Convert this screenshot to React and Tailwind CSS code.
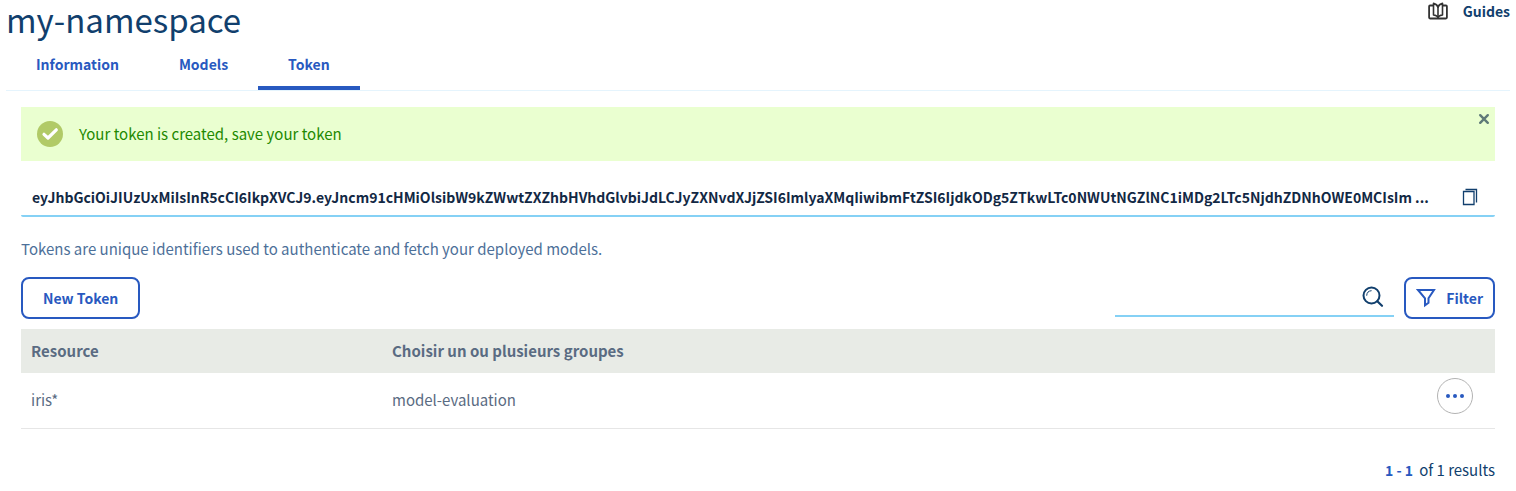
import { useState } from "react";

const TOKEN =
  "eyJhbGciOiJIUzUxMiIsInR5cCI6IkpXVCJ9.eyJncm91cHMiOlsibW9kZWwtZXZhbHVhdGlvbiJdLCJyZXNvdXJjZSI6ImlyaXMqIiwibmFtZSI6IjdkODg5ZTkwLTc0NWUtNGZlNC1iMDg2LTc5NjdhZDNhOWE0MCIsIm ...";

const TABS = ["Information", "Models", "Token"];
const ROWS = [{ resource: "iris*", groups: "model-evaluation" }];

function BookIcon() {
  return (
    <svg width="20" height="18" viewBox="0 0 20 18" fill="none" stroke="#333333" strokeWidth="1.8" strokeLinejoin="round" strokeLinecap="round" aria-hidden="true">
      <path d="M5.300 3.500H2a.9.9 0 0 0-.9.9v11.200a.9.9 0 0 0 .9.900h16a.9.9 0 0 0 .9-.9V4.400a.9.9 0 0 0-.9-.9h-3.300" />
      <path d="M5.500 1.400v11.600c2.500.3 3.900 1 4.500 2.500.6-1.500 2-2.200 4.500-2.500V1.400C12 2 10.600 3.300 10 5.200 9.400 3.300 8 2 5.500 1.400z" strokeWidth="1.600" />
      <path d="M10 5.200v10.300" strokeWidth="1.600" />
    </svg>
  );
}

function CheckIcon() {
  return (
    <svg width="26" height="26" viewBox="0 0 26 26" aria-hidden="true">
      <circle cx="13" cy="13" r="13" fill="#b1ca67" />
      <path d="m7 13.300 4 3.700 8.300-8.200" fill="none" stroke="#fff" strokeWidth="3.200" strokeLinecap="round" strokeLinejoin="round" />
    </svg>
  );
}

function CloseIcon() {
  return (
    <svg width="12" height="12" viewBox="0 0 12 12" fill="none" stroke="#5f7a78" strokeWidth="2.400" strokeLinecap="round" aria-hidden="true">
      <path d="m2.200 2.200 7.600 7.600M9.800 2.200 2.200 9.800" />
    </svg>
  );
}

function CopyIcon() {
  return (
    <svg width="16" height="18" viewBox="0 0 16 18" fill="none" stroke="#113f6d" aria-hidden="true">
      <path d="M1.500 3.500h10.500v13H1.500z" strokeWidth="1.300" />
      <path d="M3.500 1.500h11v13" strokeWidth="1.300" />
    </svg>
  );
}

function SearchIcon() {
  return (
    <svg width="22" height="22" viewBox="0 0 22 22" fill="none" stroke="#113f6d" strokeLinecap="round" aria-hidden="true">
      <circle cx="9.500" cy="9.500" r="8" strokeWidth="2" />
      <path d="m15.300 15.300 4.700 4.500" strokeWidth="2.200" />
      <path d="M4.700 9.300A4.800 4.800 0 0 1 9.200 4.700" strokeWidth="1" />
    </svg>
  );
}

function FilterIcon() {
  return (
    <svg width="20" height="20" viewBox="0 0 20 20" fill="none" stroke="#2859c0" strokeWidth="2" strokeLinejoin="miter" aria-hidden="true">
      <path d="M2 2h16l-5.500 8.300v4.500L9 17.300v-7z" />
    </svg>
  );
}

export default function App() {
  const [open, setOpen] = useState(true);
  return (
    <div className="px-[6px] text-[15px] leading-5 text-[#113f6d] [font-family:'Noto_Sans_CJK_SC','Noto_Sans',sans-serif]">
      <header className="flex items-start justify-between">
        <h1 className="mb-[6px] text-[33px] leading-[38px] font-normal">my-namespace</h1>
        <a href="#guides" className="flex items-center gap-[15px] pt-px text-sm leading-5 font-bold">
          <BookIcon />
          Guides
        </a>
      </header>

      <nav className="flex border-b border-[#e5f4fd] text-sm leading-5 text-[#2859c0]">
        {TABS.map((tab) => (
          <a
            key={tab}
            href={"#" + tab.toLowerCase()}
            aria-current={tab === "Token" ? "page" : undefined}
            className="border-b-4 border-transparent px-[30px] pt-[10px] pb-3 font-bold aria-[current=page]:border-[#2859c0]"
          >
            {tab}
          </a>
        ))}
      </nav>

      <main className="px-[15px] pt-4">
        {open && (
          <div role="status" className="flex h-[54px] items-center gap-4 bg-[#eaffd0] pl-4 text-[#228900]">
            <CheckIcon />
            <p className="flex-1">Your token is created, save your token</p>
            <button type="button" aria-label="Close" onClick={() => setOpen(false)} className="self-start p-[6px] pr-[5px]">
              <CloseIcon />
            </button>
          </div>
        )}

        <div className="mt-4 flex h-10 items-center gap-4 rounded-[2px] border-b-2 border-[#85d1f5] pt-px pr-[17px] pl-[11px] text-[#122844]">
          <input aria-label="Token" readOnly value={TOKEN} className="min-w-0 flex-1 text-sm leading-5 font-bold outline-none" />
          <button type="button" aria-label="Copy token">
            <CopyIcon />
          </button>
        </div>

        <p className="mt-[22px] text-[#4d7099]">
          Tokens are unique identifiers used to authenticate and fetch your deployed models.
        </p>

        <div className="mt-[18px] flex justify-between text-sm leading-5 text-[#2859c0]">
          <button type="button" className="h-[42px] rounded-lg border-2 border-[#2859c0] px-5 font-bold">
            New Token
          </button>
          <div className="flex items-start gap-[10px]">
            <div className="flex h-10 w-[279px] items-center border-b-2 border-[#85d1f5] pt-[2px] pr-[10px]">
              <input type="search" aria-label="Search tokens" className="min-w-0 flex-1 outline-none" />
              <button type="button" aria-label="Search">
                <SearchIcon />
              </button>
            </div>
            <button type="button" className="flex h-[42px] items-center gap-[10px] rounded-lg border-2 border-[#2859c0] px-[10px] font-bold">
              <FilterIcon />
              Filter
            </button>
          </div>
        </div>

        <table className="mt-[10px] w-full table-fixed text-left text-[#5a6b82]">
          <thead className="bg-[#e8ebe6]">
            <tr className="h-11">
              <th className="w-[361px] px-[10px] font-bold">Resource</th>
              <th className="px-[10px] font-bold">Choisir un ou plusieurs groupes</th>
              <th className="w-20" aria-label="Actions" />
            </tr>
          </thead>
          <tbody>
            {ROWS.map((row) => (
              <tr key={row.resource} className="h-[55px] border-b border-[#e6e6e6]">
                <td className="px-[10px]">{row.resource}</td>
                <td className="px-[10px]">{row.groups}</td>
                <td className="pr-[22px] pb-[9px]">
                  <button type="button" aria-label="More actions" className="ml-auto flex size-9 items-center justify-center gap-[3px] rounded-full border border-[#b3b3b3]">
                    <span className="size-1 rounded-full bg-[#2859c0]" />
                    <span className="size-1 rounded-full bg-[#2859c0]" />
                    <span className="size-1 rounded-full bg-[#2859c0]" />
                  </button>
                </td>
              </tr>
            ))}
          </tbody>
        </table>

        <p className="mt-[31px] text-right">
          <span className="mr-[6px] text-sm leading-5 font-bold text-[#2859c0]">1 - 1</span>of 1 results
        </p>
      </main>
    </div>
  );
}
